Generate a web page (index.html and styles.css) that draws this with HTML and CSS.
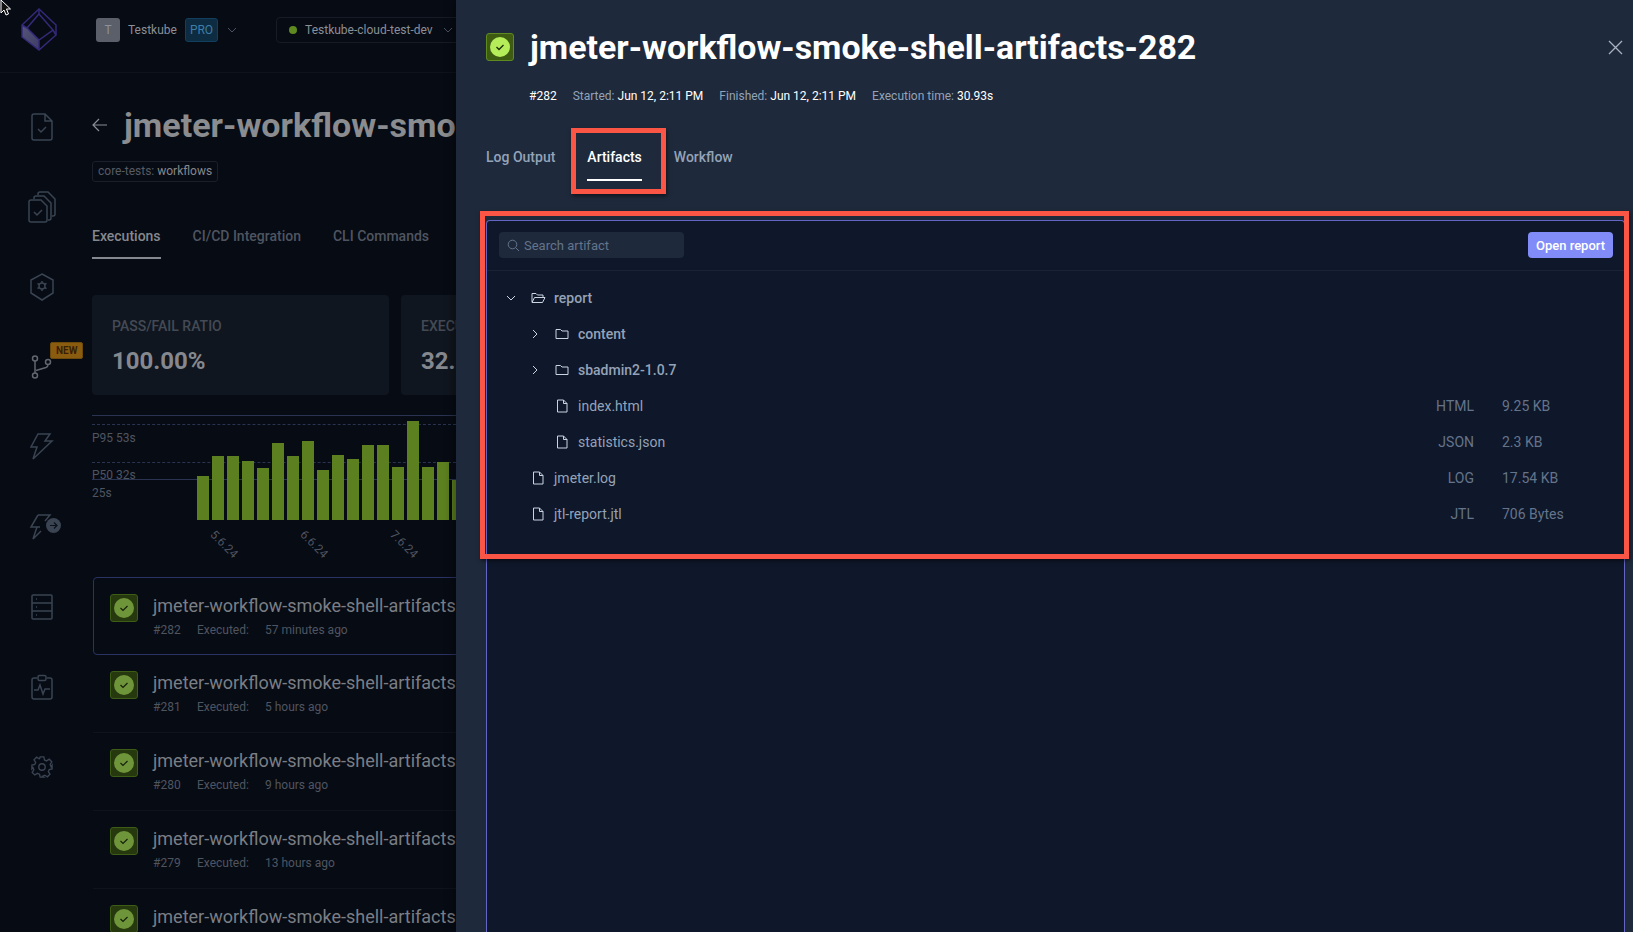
FILE: index.html
```html
<!DOCTYPE html>
<html lang="en">
<head>
    <meta charset="UTF-8">
    <title>jmeter-workflow-smoke-shell-artifacts-282</title>
    <link rel="stylesheet" href="styles.css">
</head>
<body>
    <svg class="cursor" width="12" height="16" viewBox="0 0 12 16"><path d="M1 0v13l3-3 2 5 2.500-1-2-5h4z" fill="#111" stroke="#fff" stroke-width="1"/></svg>

    <div class="page">
        <header class="topbar">
            <div class="logo">
                <svg width="36" height="44" viewBox="0 0 36 44" fill="none">
                    <defs>
                        <linearGradient id="logoShade" x1="0" y1="0" x2="1" y2="1">
                            <stop offset="0" stop-color="#55557a"/>
                            <stop offset="1" stop-color="#3d3d63"/>
                        </linearGradient>
                    </defs>
                    <path d="M1 17l5 3 12 12v10L1 29z" fill="url(#logoShade)"/>
                    <path d="M18 1l17 16v10L18 42 1 29V17z" stroke="#35297a" stroke-width="1.500"/>
                    <path d="M18 6l14 16-14 10L6 20zM18 1v5M1 17l5 3M35 27l-3-5M18 32v10" stroke="#35297a" stroke-width="1.500"/>
                </svg>
            </div>
            <div class="avatar">T</div>
            <span class="org">Testkube</span>
            <span class="pro">PRO</span>
            <svg class="chev" width="10" height="6" viewBox="0 0 10 6" fill="none"><path d="M1 1l4 4 4-4" stroke="#4a5260"/></svg>
            <div class="env">
                <i class="dot"></i>
                <span>Testkube-cloud-test-dev</span>
                <svg class="chev" width="10" height="6" viewBox="0 0 10 6" fill="none"><path d="M1 1l4 4 4-4" stroke="#4a5260"/></svg>
            </div>
        </header>

        <div class="page-body">
            <nav class="sidebar">
                <svg width="26" height="30" viewBox="0 0 26 30"><path d="M5 2h11l7 7v17a2 2 0 0 1-2 2H5a2 2 0 0 1-2-2V4a2 2 0 0 1 2-2zM16 2v7h7M9 17l3 3 5-5"/></svg>
                <svg width="30" height="34" viewBox="0 0 30 34"><path d="M11 5V4a2 2 0 0 1 2-2h8l7 7v15a2 2 0 0 1-2 2h-1M7 9V8a2 2 0 0 1 2-2h8l7 7v15a2 2 0 0 1-2 2h-1M4 10h10l6 6v14a2 2 0 0 1-2 2H4a2 2 0 0 1-2-2V12a2 2 0 0 1 2-2zM7 22l3 3 5-5"/></svg>
                <svg width="26" height="28" viewBox="0 0 26 28"><path d="M13 1l11 6v13l-11 7-11-7V7z"/><circle cx="13" cy="13" r="3"/><path d="M13 8v2M13 16v2M8.500 10.500l2 1.200M15.500 14.500l2 1.200M8.500 15.500l2-1.200M15.500 11.500l2-1.200"/></svg>
                <div class="nav-new">
                    <svg width="22" height="24" viewBox="0 0 22 24"><circle cx="4" cy="3.500" r="2.500"/><circle cx="17" cy="7" r="2.500"/><circle cx="4" cy="20.500" r="2.500"/><path d="M4 6v12M5 15.500l10-3q2-.700 2-3"/></svg>
                    <span class="new-badge">NEW</span>
                </div>
                <svg width="24" height="28" viewBox="0 0 24 28"><path d="M8 1h12l-5 7h7L3 26l4-12H1z"/></svg>
                <div class="nav-run">
                    <svg width="26" height="28" viewBox="0 0 26 28"><path d="M9 2h12l-5 6M11 14H2L9 2M8 14L4 26l8-8"/></svg>
                    <svg class="run-badge" width="15" height="15" viewBox="0 0 15 15"><circle cx="7.500" cy="7.500" r="7.500"/><path d="M4 7.500h7M8 4.500l3 3-3 3"/></svg>
                </div>
                <svg width="24" height="28" viewBox="0 0 24 28"><rect x="2" y="2" width="20" height="24" rx="1"/><path d="M2 10h20M2 18h20M6 6h1M6 14h1M6 22h1"/></svg>
                <svg width="24" height="26" viewBox="0 0 24 26"><path d="M7 4H4a2 2 0 0 0-2 2v17a2 2 0 0 0 2 2h16a2 2 0 0 0 2-2V6a2 2 0 0 0-2-2h-3"/><rect x="8" y="1.500" width="8" height="5" rx="1.500"/><path d="M4 16h4l2-5 3 9 2-5h5"/></svg>
                <svg width="22" height="24" viewBox="0 0 24 24"><circle cx="12" cy="12" r="3.500"/><path d="M10 1h4l.7 3.300 2.300 1 2.900-1.800 2.800 2.800-1.800 2.900 1 2.300L23 10v4l-3.100.7-1 2.300 1.800 2.900-2.800 2.800-2.900-1.800-2.300 1L14 23h-4l-.7-3.100-2.300-1-2.900 1.800-2.800-2.800 1.800-2.900-1-2.300L1 14v-4l3.100-.7 1-2.300-1.800-2.900 2.800-2.800L9 3.100l.3-.1z"/></svg>
            </nav>

            <main class="content">
                <div class="title-row">
                    <svg width="16" height="14" viewBox="0 0 16 14" fill="none"><path d="M15 7H1M7 1 1 7l6 6" stroke="#8a8f96" stroke-width="1.200"/></svg>
                    <h1>jmeter-workflow-smoke-shell-artifacts</h1>
                </div>
                <div class="chip">core-tests: <b>workflows</b></div>

                <div class="page-tabs">
                    <span class="page-tab active">Executions</span>
                    <span class="page-tab">CI/CD Integration</span>
                    <span class="page-tab">CLI Commands</span>
                </div>

                <div class="cards">
                    <div class="card">
                        <div class="card-label">PASS/FAIL RATIO</div>
                        <div class="card-value">100.00%</div>
                    </div>
                    <div class="card">
                        <div class="card-label">EXECUTION</div>
                        <div class="card-value">32.1s</div>
                    </div>
                </div>

                <div class="chart">
                    <div class="chart-guides">
                        <div class="guide solid"></div>
                        <div class="guide dashed g95"></div>
                        <div class="guide-label">P95 53s</div>
                        <div class="guide dashed g50"></div>
                        <div class="guide-label l50">P50 32s</div>
                        <div class="guide solid g25"></div>
                        <div class="guide-label l25">25s</div>
                    </div>
                    <div class="bars">
                        <i style="height:44px"></i><i style="height:64px"></i><i style="height:64px"></i><i style="height:59px"></i><i style="height:52px"></i><i style="height:77px"></i><i style="height:64px"></i><i style="height:79px"></i><i style="height:50px"></i><i style="height:65px"></i><i style="height:61px"></i><i style="height:75px"></i><i style="height:75px"></i><i style="height:53px"></i><i style="height:99px"></i><i style="height:53px"></i><i style="height:58px"></i><i style="height:40px"></i>
                    </div>
                    <div class="dates">
                        <span>5.6.24</span><span>6.6.24</span><span>7.6.24</span>
                    </div>
                </div>

                <div class="executions">
                    <div class="exec selected">
                        <div class="status small"><svg width="20" height="20" viewBox="0 0 20 20"><circle cx="10" cy="10" r="10" fill="#6f953a"/><path d="M6.500 10l2.500 2.500 4.500-4.500" fill="none" stroke="#15200c" stroke-width="1.200"/></svg></div>
                        <div>
                            <div class="exec-name">jmeter-workflow-smoke-shell-artifacts-282</div>
                            <div class="exec-sub"><span class="num">#282</span><span class="lbl">Executed:</span><span>57 minutes ago</span></div>
                        </div>
                    </div>
                    <div class="exec">
                        <div class="status small"><svg width="20" height="20" viewBox="0 0 20 20"><circle cx="10" cy="10" r="10" fill="#6f953a"/><path d="M6.500 10l2.500 2.500 4.500-4.500" fill="none" stroke="#15200c" stroke-width="1.200"/></svg></div>
                        <div>
                            <div class="exec-name">jmeter-workflow-smoke-shell-artifacts-281</div>
                            <div class="exec-sub"><span class="num">#281</span><span class="lbl">Executed:</span><span>5 hours ago</span></div>
                        </div>
                    </div>
                    <div class="exec">
                        <div class="status small"><svg width="20" height="20" viewBox="0 0 20 20"><circle cx="10" cy="10" r="10" fill="#6f953a"/><path d="M6.500 10l2.500 2.500 4.500-4.500" fill="none" stroke="#15200c" stroke-width="1.200"/></svg></div>
                        <div>
                            <div class="exec-name">jmeter-workflow-smoke-shell-artifacts-280</div>
                            <div class="exec-sub"><span class="num">#280</span><span class="lbl">Executed:</span><span>9 hours ago</span></div>
                        </div>
                    </div>
                    <div class="exec">
                        <div class="status small"><svg width="20" height="20" viewBox="0 0 20 20"><circle cx="10" cy="10" r="10" fill="#6f953a"/><path d="M6.500 10l2.500 2.500 4.500-4.500" fill="none" stroke="#15200c" stroke-width="1.200"/></svg></div>
                        <div>
                            <div class="exec-name">jmeter-workflow-smoke-shell-artifacts-279</div>
                            <div class="exec-sub"><span class="num">#279</span><span class="lbl">Executed:</span><span>13 hours ago</span></div>
                        </div>
                    </div>
                    <div class="exec">
                        <div class="status small"><svg width="20" height="20" viewBox="0 0 20 20"><circle cx="10" cy="10" r="10" fill="#6f953a"/><path d="M6.500 10l2.500 2.500 4.500-4.500" fill="none" stroke="#15200c" stroke-width="1.200"/></svg></div>
                        <div>
                            <div class="exec-name">jmeter-workflow-smoke-shell-artifacts-278</div>
                        </div>
                    </div>
                </div>
            </main>
        </div>
    </div>

    <aside class="drawer">
        <div class="drawer-head">
            <div class="status big"><svg width="20" height="20" viewBox="0 0 20 20"><circle cx="10" cy="10" r="10" fill="#b5ec5a"/><path d="M6.500 10l2.500 2.500 4.500-4.500" fill="none" stroke="#1c2a10" stroke-width="1.300"/></svg></div>
            <h2>jmeter-workflow-smoke-shell-artifacts-282</h2>
            <svg class="close" width="15" height="15" viewBox="0 0 15 15" fill="none"><path d="M1 1l13 13M14 1 1 14" stroke="#aab2bf" stroke-width="1.300"/></svg>
        </div>
        <div class="meta">
            <b>#282</b>
            <span>Started: <b>Jun 12, 2:11 PM</b></span>
            <span>Finished: <b>Jun 12, 2:11 PM</b></span>
            <span>Execution time: <b>30.93s</b></span>
        </div>
        <div class="tabs">
            <span class="tab">Log Output</span>
            <span class="tab active">Artifacts</span>
            <span class="tab">Workflow</span>
        </div>

        <section class="artifacts">
            <div class="toolbar">
                <div class="search">
                    <svg width="13" height="13" viewBox="0 0 13 13" fill="none"><circle cx="5.500" cy="5.500" r="4.300" stroke="#64748b"/><path d="M8.700 8.700 12 12" stroke="#64748b"/></svg>
                    <span>Search artifact</span>
                </div>
                <button class="open-report">Open report</button>
            </div>
            <div class="tree">
                <div class="row">
                    <svg class="arrow" width="10" height="10" viewBox="0 0 10 10"><path d="M1 3l4 4 4-4"/></svg>
                    <svg class="ico" width="15" height="12" viewBox="0 0 15 12"><path d="M1 10V1.500h4l1.500 1.500H12v2M1 10.500h10.500L14 5.500H3.500z"/></svg>
                    <span class="name folder">report</span>
                </div>
                <div class="row lvl2">
                    <svg class="arrow" width="10" height="10" viewBox="0 0 10 10"><path d="M3 1l4 4-4 4"/></svg>
                    <svg class="ico" width="14" height="12" viewBox="0 0 14 12"><path d="M1 10.500V1.500h4.500L7 3h6v7.500z"/></svg>
                    <span class="name folder">content</span>
                </div>
                <div class="row lvl2">
                    <svg class="arrow" width="10" height="10" viewBox="0 0 10 10"><path d="M3 1l4 4-4 4"/></svg>
                    <svg class="ico" width="14" height="12" viewBox="0 0 14 12"><path d="M1 10.500V1.500h4.500L7 3h6v7.500z"/></svg>
                    <span class="name folder">sbadmin2-1.0.7</span>
                </div>
                <div class="row lvl2 file">
                    <svg class="ico" width="14" height="14" viewBox="0 0 12 14"><path d="M1.500 1h6L11 4.500V13H1.500zM7.500 1v3.500H11"/></svg>
                    <span class="name">index.html</span>
                    <span class="type">HTML</span><span class="size">9.25 KB</span>
                </div>
                <div class="row lvl2 file">
                    <svg class="ico" width="14" height="14" viewBox="0 0 12 14"><path d="M1.500 1h6L11 4.500V13H1.500zM7.500 1v3.500H11"/></svg>
                    <span class="name">statistics.json</span>
                    <span class="type">JSON</span><span class="size">2.3 KB</span>
                </div>
                <div class="row file">
                    <svg class="ico" width="14" height="14" viewBox="0 0 12 14"><path d="M1.500 1h6L11 4.500V13H1.500zM7.500 1v3.500H11"/></svg>
                    <span class="name">jmeter.log</span>
                    <span class="type">LOG</span><span class="size">17.54 KB</span>
                </div>
                <div class="row file">
                    <svg class="ico" width="14" height="14" viewBox="0 0 12 14"><path d="M1.500 1h6L11 4.500V13H1.500zM7.500 1v3.500H11"/></svg>
                    <span class="name">jtl-report.jtl</span>
                    <span class="type">JTL</span><span class="size">706 Bytes</span>
                </div>
            </div>
        </section>

        <div class="mark mark-tab"></div>
        <div class="mark mark-panel"></div>
    </aside>
</body>
</html>
```
FILE: styles.css
```css
* {
    box-sizing: border-box;
}
html, body {
    height: 100%;
}
body {
    margin: 0;
    display: flex;
    height: 932px;
    overflow: hidden;
    background-color: #070b14;
    font-family: Roboto, sans-serif;
    position: relative;
}
.cursor {
    position: absolute;
    left: 0;
    top: 0;
    z-index: 5;
}

/* dimmed page behind the drawer */
.page {
    width: 456px;
    flex: none;
    overflow: hidden;
    display: flex;
    flex-direction: column;
}
.topbar {
    height: 73px;
    flex: none;
    display: flex;
    align-items: center;
    padding-bottom: 13px;
    border-bottom: 1px solid #0f131c;
    font-size: 12px;
    color: #8b8f96;
    white-space: nowrap;
}
.logo {
    width: 96px;
    padding-left: 21px;
    flex: none;
    display: flex;
}
.avatar {
    width: 24px;
    height: 24px;
    flex: none;
    border-radius: 3px;
    background-color: #5a5f69;
    color: #8e929a;
    text-align: center;
    line-height: 24px;
}
.org {
    margin-left: 8px;
}
.pro {
    margin-left: 8px;
    padding: 0 4px;
    height: 24px;
    line-height: 22px;
    background-color: #0d2b41;
    border: 1px solid #123f5e;
    border-radius: 3px;
    color: #3e7ea6;
}
.chev {
    flex: none;
}
.topbar > .chev {
    margin-left: 9px;
}
.env {
    margin-left: 39px;
    height: 26px;
    flex: none;
    width: 190px;
    padding-left: 12px;
    display: flex;
    align-items: center;
    gap: 8px;
    border: 1px solid #161b25;
    border-radius: 4px;
}
.env .chev {
    margin-left: 2px;
}
.dot {
    width: 8px;
    height: 8px;
    flex: none;
    border-radius: 50%;
    background-color: #5f8a20;
}
.page-body {
    display: flex;
    flex: 1;
    min-height: 0;
}
.sidebar {
    width: 84px;
    flex: none;
    display: grid;
    grid-auto-rows: 80px;
    justify-items: center;
    align-items: center;
    padding-top: 14px;
}
.sidebar svg {
    fill: none;
    stroke: #3a4452;
    stroke-width: 1.500;
}
.nav-new, .nav-run {
    position: relative;
    display: flex;
}
.nav-new svg {
    stroke: #62666d;
}
.new-badge {
    position: absolute;
    left: 19px;
    top: -13px;
    font-size: 10px;
    font-weight: 700;
    line-height: 15px;
    padding: 0 5px;
    background-color: #8a5c10;
    border: 1px solid #6e490c;
    color: #3a1f05;
    border-radius: 2px;
}
.sidebar .run-badge {
    position: absolute;
    left: 17px;
    top: 5px;
    stroke: none;
}
.run-badge circle {
    fill: #3a4452;
}
.run-badge path {
    stroke: #0b101a;
    stroke-width: 1.200;
}
.content {
    flex: 1;
    min-width: 0;
    padding-left: 8px;
    white-space: nowrap;
}
.title-row {
    display: flex;
    align-items: center;
    gap: 16px;
    height: 52px;
    margin-top: 26px;
}
.title-row svg {
    flex: none;
}
h1 {
    margin: 0;
    font-size: 34px;
    font-weight: 700;
    color: #8a8c8f;
}
.chip {
    display: inline-block;
    margin-top: 10px;
    height: 21px;
    line-height: 19px;
    padding: 0 5px;
    font-size: 12px;
    color: #565b64;
    border: 1px solid #1a1f2a;
    border-radius: 3px;
}
.chip b {
    font-weight: 400;
    color: #85888e;
}
.page-tabs {
    display: flex;
    gap: 32px;
    margin-top: 46px;
    font-size: 14px;
    font-weight: 500;
    color: #4f5560;
}
.page-tab {
    padding-bottom: 13px;
    border-bottom: 2px solid transparent;
}
.page-tab.active {
    color: #85888e;
    border-color: #85888e;
}
.cards {
    display: flex;
    gap: 12px;
    margin-top: 36px;
}
.card {
    width: 297px;
    height: 100px;
    flex: none;
    padding: 23px 20px 0;
    background-color: #10161f;
    border-radius: 4px;
}
.card-label {
    font-size: 14px;
    font-weight: 500;
    color: #444a55;
}
.card-value {
    margin-top: 13px;
    font-size: 24px;
    font-weight: 700;
    color: #85888e;
}
.chart {
    position: relative;
    height: 156px;
    margin-top: 20px;
}
.chart-guides {
    font-size: 12px;
    color: #4f5560;
}
.guide {
    position: absolute;
    left: 0;
    right: 0;
    height: 0;
}
.guide.solid {
    top: 0;
    border-top: 1.500px solid #2a3350;
}
.guide.dashed {
    border-top: 1px dashed #2a3350;
}
.g95 {
    top: 9px;
}
.g50 {
    top: 47px;
}
.guide.g25 {
    top: 64px;
}
.guide-label {
    position: absolute;
    left: 0;
    top: 16px;
}
.l50 {
    top: 53px;
}
.l25 {
    top: 71px;
}
.bars {
    position: absolute;
    left: 105px;
    top: 0;
    height: 105px;
    display: flex;
    align-items: flex-end;
    gap: 3px;
}
.bars i {
    width: 12px;
    flex: none;
    background-color: #5c7f1f;
}
.dates {
    position: absolute;
    left: 116px;
    top: 121px;
    display: flex;
    gap: 60px;
    font-size: 12px;
    color: #4f5560;
}
.dates span {
    width: 30px;
    transform: rotate(45deg);
}
.executions {
    margin-top: 6px;
    padding-left: 1px;
}
.exec {
    display: flex;
    gap: 15px;
    height: 78px;
    width: 440px;
    padding: 16px 0 0 17px;
    border-bottom: 1px solid #0e131c;
}
.exec.selected {
    border: 1px solid #2a3363;
    border-radius: 4px;
    padding: 16px 0 0 16px;
}
.status {
    width: 28px;
    height: 28px;
    flex: none;
    display: flex;
    align-items: center;
    justify-content: center;
    border-radius: 3px;
}
.status.small {
    background-color: #26380d;
    border: 1px solid #3d5c15;
}
.status.big {
    background-color: #3d5c12;
    border: 1px solid #5f8a20;
}
.exec-name {
    font-size: 18px;
    line-height: 24px;
    color: #7a7e85;
}
.exec-sub {
    display: flex;
    margin-top: 5px;
    font-size: 12px;
    line-height: 15px;
    color: #4f5560;
}
.exec-sub .num {
    width: 44px;
}
.exec-sub .lbl {
    width: 68px;
}

/* drawer */
.drawer {
    flex: 1;
    min-width: 0;
    position: relative;
    background-color: #1e293b;
    padding: 0 8px 0 30px;
    display: flex;
    flex-direction: column;
    box-shadow: -4px 0 8px rgba(0, 0, 0, 0.3);
}
.drawer-head {
    display: flex;
    align-items: center;
    gap: 16px;
    height: 94px;
    flex: none;
}
.drawer-head h2 {
    margin: 0;
    flex: 1;
    font-size: 33.900px;
    font-weight: 700;
    color: #fff;
    white-space: nowrap;
}
.close {
    margin-right: 2px;
    flex: none;
}
.meta {
    display: flex;
    gap: 16px;
    padding-left: 43px;
    font-size: 12px;
    line-height: 16px;
    margin-top: -6px;
    color: #94a3b8;
}
.meta b {
    font-weight: 400;
    color: #fff;
}
.tabs {
    display: flex;
    gap: 32px;
    height: 40px;
    margin-top: 40px;
    font-size: 14px;
    font-weight: 500;
    color: #94a3b8;
}
.tab {
    height: 37px;
    padding-top: 5px;
}
.tab.active {
    color: #fff;
    border-bottom: 2px solid #fff;
}
.artifacts {
    flex: 1;
    margin-top: 36px;
    background-color: #0f172a;
    border: 1px solid #6366c4;
    border-bottom: 0;
    border-radius: 4px 4px 0 0;
}
.toolbar {
    height: 50px;
    padding: 11px 11px 0 12px;
    display: flex;
    justify-content: space-between;
    border-bottom: 1px solid #1a2333;
}
.search {
    width: 185px;
    height: 26px;
    padding-left: 8px;
    display: flex;
    align-items: center;
    gap: 4px;
    background-color: #1e293b;
    border-radius: 4px;
    font-size: 13px;
    color: #64748b;
}
.open-report {
    width: 85px;
    height: 26px;
    padding: 0;
    border: none;
    border-radius: 4px;
    background-color: #818cf8;
    color: #fff;
    font-family: Roboto, sans-serif;
    font-size: 13px;
    font-weight: 500;
}
.tree {
    padding-top: 9px;
}
.row {
    height: 36px;
    display: flex;
    align-items: center;
    padding-left: 19px;
    font-size: 14px;
    color: #94a3b8;
}
.row.lvl2 {
    padding-left: 43px;
}
.row.file {
    padding-left: 44px;
}
.row.lvl2.file {
    padding-left: 68px;
}
.arrow {
    flex: none;
    fill: none;
    stroke: #cbd5e1;
    margin-right: 15px;
}
.ico {
    flex: none;
    fill: none;
    stroke: #cbd5e1;
    margin-right: 8px;
}
.lvl2 .ico, .file .ico {
    margin-right: 9px;
}
.name.folder {
    font-weight: 500;
}
.type {
    margin-left: auto;
    width: 60px;
    text-align: right;
    color: #64748b;
}
.size {
    width: 150px;
    padding-left: 28px;
    color: #64748b;
}

/* red annotation boxes drawn over the screenshot */
.mark {
    position: absolute;
    border: 5px solid #fb5546;
    box-shadow: 1px 2px 4px rgba(0, 0, 0, 0.5);
}
.mark-tab {
    left: 115px;
    top: 128px;
    width: 95px;
    height: 66px;
}
.mark-panel {
    left: 24px;
    top: 211px;
    width: 1149px;
    height: 348px;
}
```
